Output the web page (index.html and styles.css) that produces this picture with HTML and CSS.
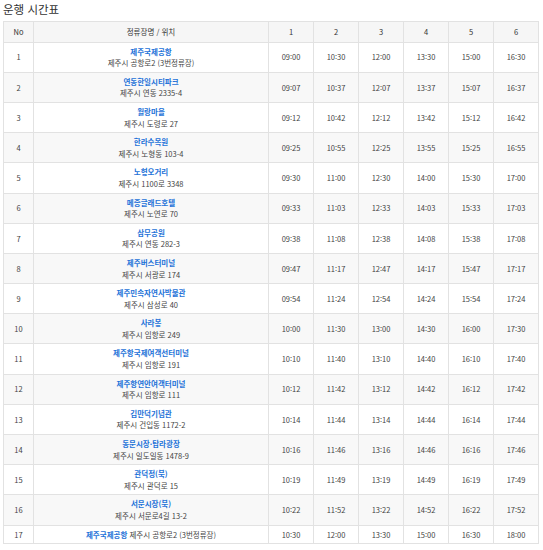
FILE: index.html
```html
<!DOCTYPE html>
<html lang="ko">
<head>
<meta charset="utf-8">
<title>운행 시간표</title>
<link rel="stylesheet" href="styles.css">
</head>
<body>
<div class="page">
  <h2 class="title">운행 시간표</h2>
  <table class="timetable">
    <colgroup>
      <col class="c-no"><col class="c-name">
      <col class="c-t"><col class="c-t"><col class="c-t"><col class="c-t"><col class="c-t"><col class="c-t">
    </colgroup>
    <thead>
      <tr><th>No</th><th>정류장명 / 위치</th><th>1</th><th>2</th><th>3</th><th>4</th><th>5</th><th>6</th></tr>
    </thead>
    <tbody>
      <tr><td>1</td><td class="stop"><b>제주국제공항</b><br>제주시 공항로2 (3번정류장)</td><td>09:00</td><td>10:30</td><td>12:00</td><td>13:30</td><td>15:00</td><td>16:30</td></tr>
      <tr><td>2</td><td class="stop"><b>연동한일시티파크</b><br>제주시 연동 2335-4</td><td>09:07</td><td>10:37</td><td>12:07</td><td>13:37</td><td>15:07</td><td>16:37</td></tr>
      <tr><td>3</td><td class="stop"><b>월랑마을</b><br>제주시 도령로 27</td><td>09:12</td><td>10:42</td><td>12:12</td><td>13:42</td><td>15:12</td><td>16:42</td></tr>
      <tr><td>4</td><td class="stop"><b>한라수목원</b><br>제주시 노형동 103-4</td><td>09:25</td><td>10:55</td><td>12:25</td><td>13:55</td><td>15:25</td><td>16:55</td></tr>
      <tr><td>5</td><td class="stop"><b>노형오거리</b><br>제주시 1100로 3348</td><td>09:30</td><td>11:00</td><td>12:30</td><td>14:00</td><td>15:30</td><td>17:00</td></tr>
      <tr><td>6</td><td class="stop"><b>메종글래드호텔</b><br>제주시 노연로 70</td><td>09:33</td><td>11:03</td><td>12:33</td><td>14:03</td><td>15:33</td><td>17:03</td></tr>
      <tr><td>7</td><td class="stop"><b>삼무공원</b><br>제주시 연동 282-3</td><td>09:38</td><td>11:08</td><td>12:38</td><td>14:08</td><td>15:38</td><td>17:08</td></tr>
      <tr><td>8</td><td class="stop"><b>제주버스터미널</b><br>제주시 서광로 174</td><td>09:47</td><td>11:17</td><td>12:47</td><td>14:17</td><td>15:47</td><td>17:17</td></tr>
      <tr><td>9</td><td class="stop"><b>제주민속자연사박물관</b><br>제주시 삼성로 40</td><td>09:54</td><td>11:24</td><td>12:54</td><td>14:24</td><td>15:54</td><td>17:24</td></tr>
      <tr><td>10</td><td class="stop"><b>사라봉</b><br>제주시 임항로 249</td><td>10:00</td><td>11:30</td><td>13:00</td><td>14:30</td><td>16:00</td><td>17:30</td></tr>
      <tr><td>11</td><td class="stop"><b>제주항국제여객선터미널</b><br>제주시 임항로 191</td><td>10:10</td><td>11:40</td><td>13:10</td><td>14:40</td><td>16:10</td><td>17:40</td></tr>
      <tr><td>12</td><td class="stop"><b>제주항연안여객터미널</b><br>제주시 임항로 111</td><td>10:12</td><td>11:42</td><td>13:12</td><td>14:42</td><td>16:12</td><td>17:42</td></tr>
      <tr><td>13</td><td class="stop"><b>김만덕기념관</b><br>제주시 건입동 1172-2</td><td>10:14</td><td>11:44</td><td>13:14</td><td>14:44</td><td>16:14</td><td>17:44</td></tr>
      <tr><td>14</td><td class="stop"><b>동문시장·탑라광장</b><br>제주시 일도일동 1478-9</td><td>10:16</td><td>11:46</td><td>13:16</td><td>14:46</td><td>16:16</td><td>17:46</td></tr>
      <tr><td>15</td><td class="stop"><b>관덕정(북)</b><br>제주시 관덕로 15</td><td>10:19</td><td>11:49</td><td>13:19</td><td>14:49</td><td>16:19</td><td>17:49</td></tr>
      <tr><td>16</td><td class="stop"><b>서문시장(북)</b><br>제주시 서문로4길 13-2</td><td>10:22</td><td>11:52</td><td>13:22</td><td>14:52</td><td>16:22</td><td>17:52</td></tr>
      <tr><td>17</td><td class="stop"><b>제주국제공항</b> 제주시 공항로2 (3번정류장)</td><td>10:30</td><td>12:00</td><td>13:30</td><td>15:00</td><td>16:30</td><td>18:00</td></tr>
    </tbody>
  </table>
</div>
</body>
</html>
```
FILE: styles.css
```css
html, body {
  margin: 0;
  padding: 0;
  background: #ffffff;
}
.page {
  padding: 1px 5px 0 3px;
  font-family: "Noto Sans CJK KR", "Noto Sans", sans-serif;
  color: #444;
}
.title {
  margin: 0 0 3px 0;
  font-size: 11.5px;
  line-height: 17px;
  font-weight: 400;
  color: #333;
}
.timetable {
  width: 535px;
  border-collapse: collapse;
  table-layout: fixed;
  font-size: 7.5px;
  line-height: 11.6px;
}
.c-no { width: 30px; }
.c-name { width: 235px; }
.c-t { width: 45px; }
.timetable th,
.timetable td {
  border: 1px solid #e2e2e2;
  text-align: center;
  padding: 3px 1px;
  vertical-align: middle;
}
.timetable th {
  background: #f6f6f6;
  font-weight: 400;
  color: #333;
  padding: 4px 1px;
}
.timetable td {
  color: #444;
}
.timetable tbody tr:nth-child(even) td {
  background: #f8f8f8;
}
.stop {
  color: #555;
}
.stop b {
  color: #1d72d8;
  font-weight: 700;
}
```
